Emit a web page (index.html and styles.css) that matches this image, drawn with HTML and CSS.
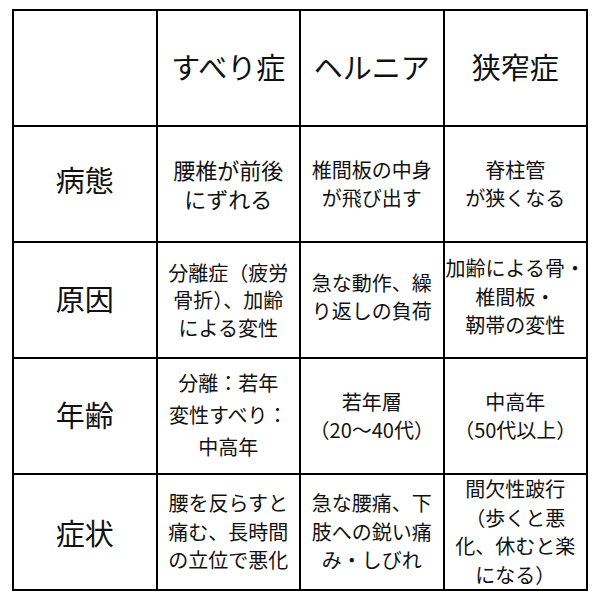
FILE: index.html
```html
<!DOCTYPE html>
<html lang="ja">
<head>
<meta charset="utf-8">
<title>腰の疾患比較</title>
<link rel="stylesheet" href="styles.css">
</head>
<body>
<div class="table">
  <div class="cell"></div>
  <div class="cell head up">すべり症</div>
  <div class="cell head up">ヘルニア</div>
  <div class="cell head up">狭窄症</div>

  <div class="cell head upmore">病態</div>
  <div class="cell body large">腰椎が前後<br>にずれる</div>
  <div class="cell body">椎間板の中身<br>が飛び出す</div>
  <div class="cell body">脊柱管<br>が狭くなる</div>

  <div class="cell head up">原因</div>
  <div class="cell body tight">分離症（疲労<br>骨折）、加齢<br>による変性</div>
  <div class="cell body raise">急な動作、繰<br>り返しの負荷</div>
  <div class="cell body raise">加齢による骨・<br>椎間板・<br>靭帯の変性</div>

  <div class="cell head up">年齢</div>
  <div class="cell body loose">分離：若年<br>変性すべり：<br>中高年</div>
  <div class="cell body">若年層<br>（20〜40代）</div>
  <div class="cell body">中高年<br>（50代以上）</div>

  <div class="cell head">症状</div>
  <div class="cell body">腰を反らすと<br>痛む、長時間<br>の立位で悪化</div>
  <div class="cell body">急な腰痛、下<br>肢への鋭い痛<br>み・しびれ</div>
  <div class="cell body">間欠性跛行<br>（歩くと悪<br>化、休むと楽<br>になる）</div>
</div>
</body>
</html>
```

FILE: styles.css
```css
html, body {
  margin: 0;
  padding: 0;
  background: #fff;
}

body {
  padding: 9px 12px;
  font-family: "Noto Sans CJK JP", "Noto Sans", sans-serif;
  color: #111;
}

.table {
  width: 576px;
  height: 582px;
  box-sizing: border-box;
  background: #000;
  padding: 2px;
  display: grid;
  grid-template-columns: repeat(4, 1fr);
  grid-template-rows: repeat(5, 1fr);
  gap: 2px;
}

.cell {
  background: #fff;
  display: flex;
  align-items: center;
  justify-content: center;
  text-align: center;
  white-space: nowrap;
  overflow: hidden;
}

.head {
  font-size: 29px;
  line-height: 1.2;
}

.head.up {
  padding-bottom: 4px;
}

.head.upmore {
  padding-bottom: 9px;
}

.body {
  font-size: 20px;
  line-height: 28.5px;
}

.body.large {
  font-size: 22px;
  line-height: 29px;
}

.body.tight {
  line-height: 27.5px;
}

.body.loose {
  line-height: 32px;
  padding-bottom: 2px;
}

.body.raise {
  padding-bottom: 6px;
}
```
